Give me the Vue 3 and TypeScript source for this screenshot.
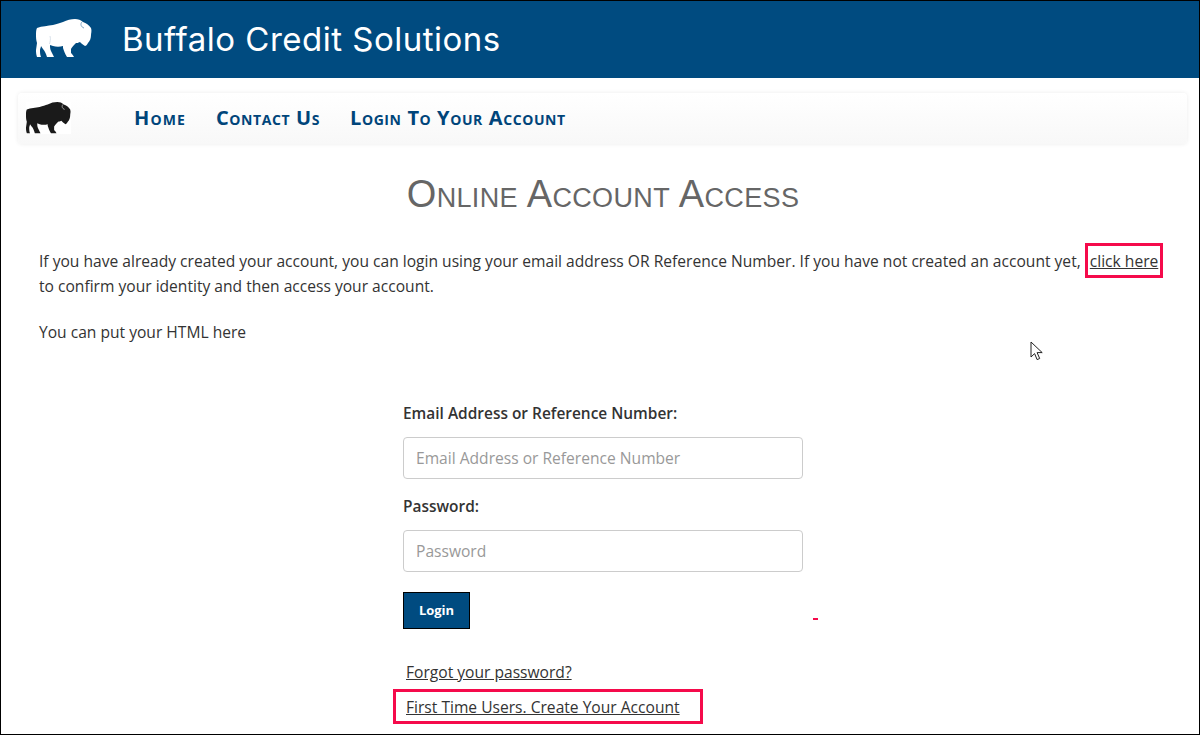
<script setup lang="ts">
import { ref } from 'vue'

const email = ref('')
const password = ref('')

const navLinks = ['Home', 'Contact Us', 'Login To Your Account']

const bisonPath =
  'M1 9C6 7 12 7 17 6C21 5 24 4 27 3C31 1 35 0 39 0C42 0 45 1 47 3C50 4 53 6 55 9C56 12 55 14 55 16C55 19 54 22 52 24C51 26 50 27 49 27C47 26 45 24 44 23C42 24 41 24 40 24C38 26 36 28 35 30C35 32 35 33 35 34C36 35 37 36 38 38L31 38C29 35 28 32 27 29L27 27C24 28 20 28 17 27C16 27 15 26 14 26C14 28 14 30 15 32C16 34 17 36 18 38L11 38C10 35 9 32 7 30L5 27C5 28 4 30 4 31C4 33 4 36 5 38L1 38C0 35 0 33 0 31L1 24C0 21 0 18 0 16C0 13 0 11 1 9Z'
</script>

<template>
  <div class="page">
    <header class="banner">
      <svg class="banner-logo" width="56" height="39" viewBox="0 0 56 39">
        <path :d="bisonPath" fill="#fff" />
        <path d="M46 3c-2 2-1 5 2 6" fill="none" stroke="#7fa5c4" stroke-width="1" />
        <path d="M14 17c1 3 0 6-.5 8" fill="none" stroke="#c8d6e2" stroke-width="0.7" />
      </svg>
      <span class="banner-title">Buffalo Credit Solutions</span>
    </header>

    <nav class="navbar">
      <div class="nav-logo">
        <svg width="45" height="32" viewBox="0 0 56 39" preserveAspectRatio="none">
          <path :d="bisonPath" fill="#1a1a1a" />
          <path d="M46 3c-2 2-1 5 2 6" fill="none" stroke="#bbb" stroke-width="1" />
        </svg>
      </div>
      <ul class="nav-links">
        <li v-for="link in navLinks" :key="link">
          <a href="#">{{ link }}</a>
        </li>
      </ul>
    </nav>

    <main class="content">
      <h1>Online Account Access</h1>
      <p class="intro">
        If you have already created your account, you can login using your email address OR Reference Number. If you have not created an account yet,
        <a href="#" class="marked">click here</a>
        to confirm your identity and then access your account.
      </p>
      <p class="note">You can put your HTML here</p>

      <form class="login-form" @submit.prevent>
        <label for="email">Email Address or Reference Number:</label>
        <input id="email" v-model="email" type="text" placeholder="Email Address or Reference Number" />
        <label for="password">Password:</label>
        <input id="password" v-model="password" type="password" placeholder="Password" />
        <button type="submit">Login</button>
        <i class="dash"></i>
        <a href="#" class="form-link">Forgot your password?</a>
        <a href="#" class="form-link first-time">First Time Users. Create Your Account</a>
      </form>
    </main>

    <svg class="cursor" width="14" height="20" viewBox="0 0 14 20">
      <path d="M1 1v15l3.600-3.400 2.500 6 2.600-1.100-2.600-5.900h5.100z" fill="#fff" stroke="#222" stroke-width="1" />
    </svg>
  </div>
</template>

<style>
html,
body {
  margin: 0;
  background: #fff;
}
</style>

<style scoped>
.page {
  position: relative;
  box-sizing: border-box;
  height: 735px;
  overflow: hidden;
  border: 1px solid #000;
  background: #fff;
  color: #333;
  font-family: "Open Sans", sans-serif;
  font-size: 15.6px;
}

.banner {
  display: flex;
  align-items: center;
  height: 77px;
  padding-left: 35px;
  background: #004b80;
  color: #fff;
}

.banner-logo {
  margin-top: -2px;
}

.banner-title {
  margin: -2px 0 0 30px;
  font-family: Inter, sans-serif;
  font-size: 33px;
  font-weight: 400;
  letter-spacing: 0.5px;
}

.navbar {
  display: flex;
  align-items: center;
  box-sizing: border-box;
  height: 51px;
  margin: 15px 12px 0 17px;
  padding-left: 8px;
  border-radius: 4px;
  background: linear-gradient(#fff, #f8f8f8);
  box-shadow: 0 0 4px rgba(0, 0, 0, 0.08);
}

.nav-logo {
  display: flex;
  align-self: flex-end;
  margin-bottom: 10px;
  background: #fff;
}

.nav-links {
  display: flex;
  gap: 30px;
  margin: -2px 0 0 63px;
  padding: 0;
  list-style: none;
}

.nav-links a {
  color: #00457a;
  font-size: 20px;
  font-weight: 700;
  font-variant: small-caps;
  letter-spacing: 0.6px;
  text-decoration: none;
}

.nav-links li:first-child a {
  letter-spacing: 1.1px;
}

.content {
  padding: 0 32px 0 38px;
}

h1 {
  margin: 28px 0 0;
  color: #666;
  font-family: "Liberation Sans", sans-serif;
  font-size: 38px;
  font-weight: 400;
  font-variant: small-caps;
  letter-spacing: 0.35px;
  line-height: 44px;
  text-align: center;
}

.intro {
  margin: 33px 0 0;
  line-height: 25px;
}

.note {
  margin: 21px 0 0;
  line-height: 25px;
}

a {
  color: #333;
}

.marked,
.first-time {
  position: relative;
}

.marked {
  margin-left: 5px;
}

.marked::after,
.first-time::after {
  content: "";
  position: absolute;
  border: 3px solid #f50a4b;
}

.marked::after {
  inset: -7px -5px -6px -5px;
}

.first-time::after {
  inset: -7px -23px -6px -13px;
}

.login-form {
  position: relative;
  display: flex;
  flex-direction: column;
  align-items: flex-start;
  width: 400px;
  margin: 57px auto 0;
}

label {
  font-size: 15.45px;
  font-weight: 600;
  line-height: 22px;
}

input {
  box-sizing: border-box;
  width: 400px;
  height: 42px;
  margin: 13px 0 16px;
  padding: 0 12px;
  border: 1px solid #ccc;
  border-radius: 4px;
  background: #fff;
  color: #333;
  font: inherit;
  outline: none;
}

input::placeholder {
  color: #999;
}

button {
  width: 67px;
  height: 37px;
  margin-top: 4px;
  padding: 0 0 2px;
  border: 1px solid #000;
  background: #004b80;
  color: #fff;
  font-family: inherit;
  font-size: 13px;
  font-weight: 700;
}

.dash {
  position: absolute;
  top: 216px;
  left: 410px;
  width: 5px;
  height: 2px;
  background: #f50a4b;
}

.form-link {
  margin: 0 0 0 3px;
  line-height: 22px;
}

.form-link:first-of-type {
  margin-top: 32px;
}

.first-time {
  margin-top: 13px;
}

.cursor {
  position: absolute;
  top: 340px;
  left: 1029px;
}
</style>
